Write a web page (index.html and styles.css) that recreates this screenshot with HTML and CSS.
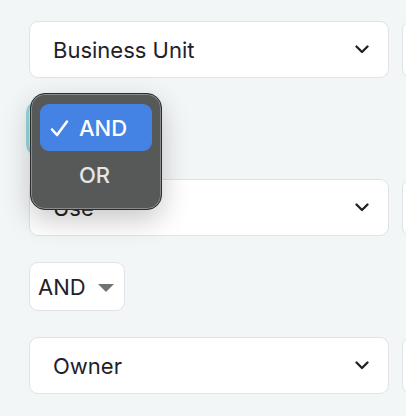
FILE: index.html
```html
<!DOCTYPE html>
<html>
<head>
<meta charset="utf-8">
<link rel="stylesheet" href="styles.css">
</head>
<body>
<div class="page">
  <div class="row">
    <div class="select wide"><span>Business Unit</span><svg class="chev" width="14" height="9" viewBox="0 0 14 9"><path d="M1.5 1.5 L7 7 L12.5 1.5" fill="none" stroke="#1e2227" stroke-width="2.3" stroke-linecap="round" stroke-linejoin="round"/></svg></div>
    <div class="select next"></div>
  </div>
  <div class="row">
    <div class="select op focus"><span>AND</span><span class="tri"></span></div>
  </div>
  <div class="row">
    <div class="select wide"><span>Use</span><svg class="chev" width="14" height="9" viewBox="0 0 14 9"><path d="M1.5 1.5 L7 7 L12.5 1.5" fill="none" stroke="#1e2227" stroke-width="2.3" stroke-linecap="round" stroke-linejoin="round"/></svg></div>
    <div class="select next"></div>
  </div>
  <div class="row">
    <div class="select op"><span>AND</span><span class="tri"></span></div>
  </div>
  <div class="row">
    <div class="select wide"><span>Owner</span><svg class="chev" width="14" height="9" viewBox="0 0 14 9"><path d="M1.5 1.5 L7 7 L12.5 1.5" fill="none" stroke="#1e2227" stroke-width="2.3" stroke-linecap="round" stroke-linejoin="round"/></svg></div>
    <div class="select next"></div>
  </div>
</div>
<div class="menu">
  <div class="item active"><svg class="check" width="19" height="19" viewBox="0 0 19 19"><path d="M2 10.5 L7 16 L17 2.5" fill="none" stroke="#ffffff" stroke-width="2.6" stroke-linecap="round" stroke-linejoin="round"/></svg><span>AND</span></div>
  <div class="item"><span>OR</span></div>
</div>
</body>
</html>
```
FILE: styles.css
```css
html, body {
  margin: 0;
  padding: 0;
  background: #f3f6f7;
  overflow: hidden;
  width: 406px;
  height: 416px;
  font-family: Inter, "Liberation Sans", sans-serif;
}
.page {
  width: 406px;
  box-sizing: border-box;
  overflow: hidden;
  padding: 21px 0 0 29px;
  display: flex;
  flex-direction: column;
  gap: 26px;
}
.row {
  display: flex;
  gap: 13px;
}
.select {
  box-sizing: border-box;
  background: #ffffff;
  border: 1px solid #dfe3e8;
  border-radius: 9px;
  display: flex;
  align-items: center;
  color: #1e2227;
  font-size: 22px;
  flex-shrink: 0;
}
.wide {
  width: 360px;
  height: 57px;
  padding: 0 19px 0 23px;
  justify-content: space-between;
}
.next {
  width: 200px;
  height: 57px;
}
.op {
  width: 96px;
  height: 49px;
  padding-left: 8px;
}
.focus {
  box-shadow: 0 0 0 3px rgba(110, 205, 212, 0.7);
}
.tri {
  width: 0;
  height: 0;
  border-left: 8.5px solid transparent;
  border-right: 8.5px solid transparent;
  border-top: 8px solid #6e7573;
  margin-left: 12px;
  margin-top: 2px;
}
.chev {
  display: block;
}
.menu {
  position: absolute;
  left: 30px;
  top: 93px;
  width: 132px;
  height: 117px;
  box-sizing: border-box;
  background: #575958;
  border-radius: 15px;
  border: 1px solid #2b2b2b;
  box-shadow: inset 0 0 0 1px #8c8c8c, 0 10px 28px rgba(0,0,0,0.22);
  padding: 10px 9px;
  display: flex;
  flex-direction: column;
}
.item {
  height: 47px;
  border-radius: 9px;
  display: flex;
  align-items: center;
  padding-left: 39px;
  position: relative;
  color: #e6e6e6;
  font-size: 22px;
  font-weight: 500;
}
.item.active {
  background: #4482e4;
  color: #ffffff;
}
.check {
  position: absolute;
  left: 10px;
  top: 15px;
}
```
